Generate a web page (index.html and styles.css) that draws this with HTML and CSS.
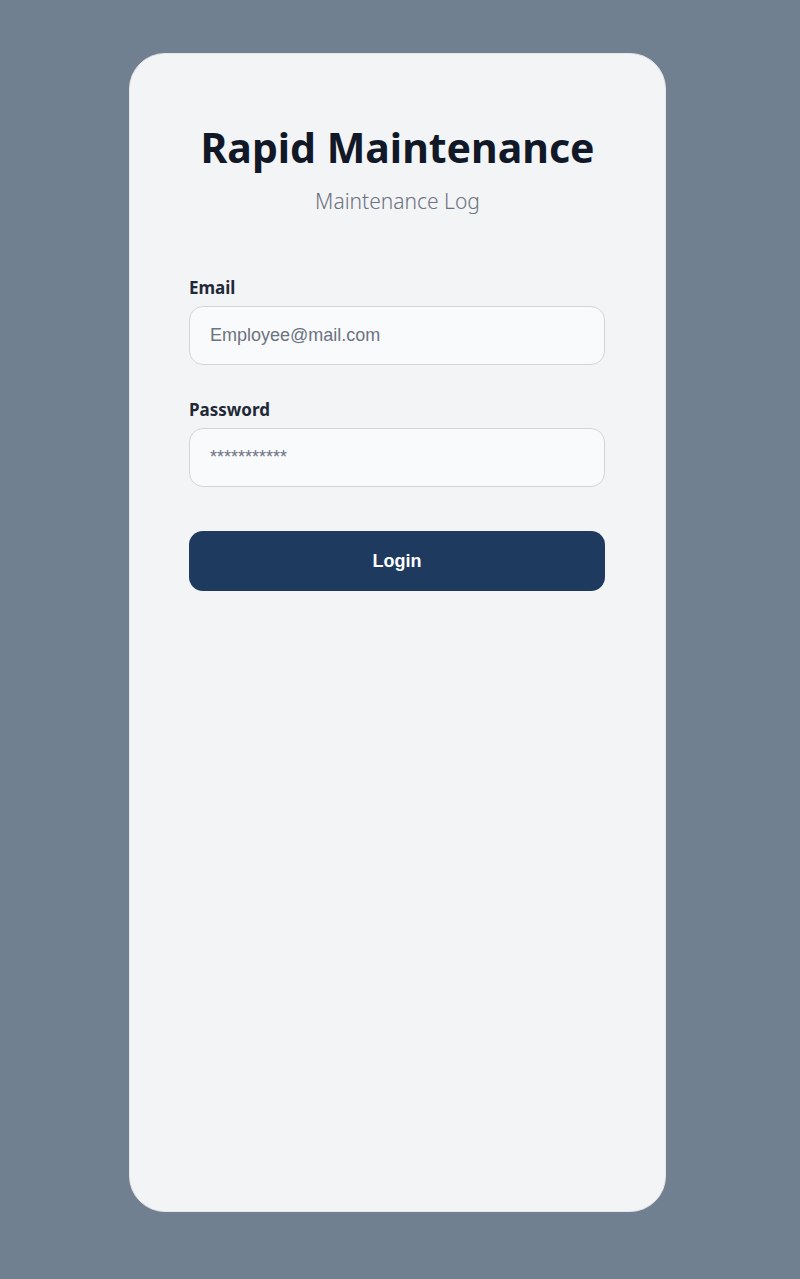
FILE: index.html
```html
<!DOCTYPE html>
<html lang="en">
<head>
<meta charset="utf-8">
<title>Rapid Maintenance</title>
<link rel="stylesheet" href="styles.css">
</head>
<body>
<main class="card">
  <header class="head">
    <h1 class="title">Rapid Maintenance</h1>
    <p class="subtitle">Maintenance Log</p>
  </header>
  <form class="form">
    <div class="field">
      <label class="label" for="email">Email</label>
      <input class="input" id="email" type="email" placeholder="Employee@mail.com">
    </div>
    <div class="field">
      <label class="label" for="pw">Password</label>
      <input class="input" id="pw" type="text" placeholder="***********">
    </div>
    <button class="btn" type="button">Login</button>
  </form>
</main>
</body>
</html>
```

FILE: styles.css
```css
* { box-sizing: border-box; }
html, body { margin: 0; padding: 0; }
body {
  background: #708090;
  min-height: 1279px;
  padding: 53px 0 0 129px;
  font-family: "Noto Sans", "Open Sans", sans-serif;
}
.card {
  width: 537px;
  height: 1159px;
  background: #f3f4f6;
  border: 1px solid #e5e7eb;
  border-radius: 36px;
  padding: 69px 59px 0 59px;
}
.head { text-align: center; }
.title {
  margin: 0;
  font-size: 41px;
  font-weight: 700;
  color: #111827;
  line-height: 48px;
}
.subtitle {
  margin: 16px 0 0 0;
  font-size: 21px;
  font-weight: 300;
  color: #6b7280;
  line-height: 28px;
}
.form {
  margin-top: 62px;
  display: flex;
  flex-direction: column;
}
.field { display: flex; flex-direction: column; margin-bottom: 34px; }
.label {
  font-size: 17px;
  font-weight: 700;
  color: #1f2937;
  line-height: 22px;
  margin-bottom: 7px;
}
.input {
  height: 59px;
  width: 416px;
  border: 1px solid #d1d5db;
  border-radius: 14px;
  background: #f9fafb;
  padding: 0 20px;
  font-family: "Liberation Sans", Arial, sans-serif;
  font-size: 18px;
  color: #111827;
}
.input::placeholder { color: #6b7280; opacity: 1; }
.btn {
  margin-top: 10px;
  width: 416px;
  height: 60px;
  border: none;
  border-radius: 14px;
  background: #1e3a5f;
  color: #ffffff;
  font-family: "Liberation Sans", Arial, sans-serif;
  font-weight: 700;
  font-size: 18px;
}
```
